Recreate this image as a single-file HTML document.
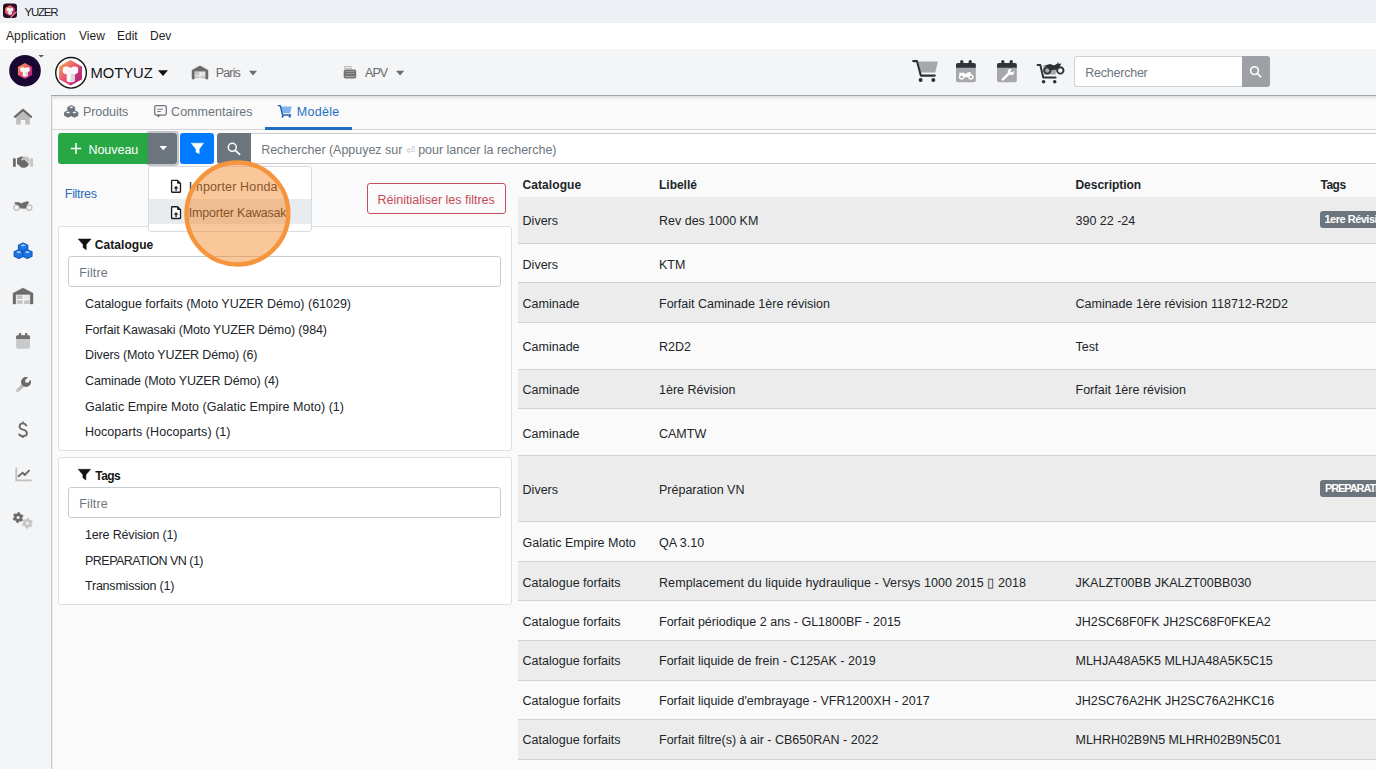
<!DOCTYPE html>
<html><head><meta charset="utf-8">
<style>
*{box-sizing:border-box}
html,body{margin:0;padding:0;width:1376px;height:769px;overflow:hidden;background:#f8f8f8;font-family:"Liberation Sans",sans-serif;color:#212529}
.a{position:absolute;line-height:1;white-space:nowrap}
.b{position:absolute}
svg{position:absolute;overflow:visible}
.row{position:absolute;left:518px;width:858px}
.g{background:#ececec}
.w{background:#fafafa}
.rl{position:absolute;left:518px;width:858px;height:1px;background:#d2d3d6}
</style></head><body>
<!-- chrome -->
<div class="b" style="left:0;top:0;width:1376px;height:23px;background:linear-gradient(#edf1f6 0,#edf1f6 19px,#f0f2f5 23px)"></div>
<div class="b" style="left:0;top:23px;width:1376px;height:26px;background:#ffffff"></div>
<div class="b" style="left:0;top:49px;width:1376px;height:47px;background:#f4f5f7"></div>
<div class="b" style="left:0;top:96px;width:51px;height:673px;background:#f4f5f7"></div>
<div class="b" style="left:51px;top:95px;width:1px;height:674px;background:#c8c8ca"></div>
<div class="b" style="left:51px;top:95px;width:1325px;height:1px;background:#a3a5a8"></div>
<div class="b" style="left:52px;top:96px;width:1324px;height:673px;background:#fafafa"></div>
<div class="b" style="left:52px;top:96px;width:1px;height:673px;background:#efeff1"></div>
<div class="b" style="left:52px;top:96px;width:1324px;height:4px;background:linear-gradient(#dcdddf,#fafafa)"></div>
<div class="b" style="left:52px;top:129px;width:1324px;height:1px;background:#d4d6d8"></div>
<div class="b" style="left:265px;top:127px;width:87px;height:3px;background:#1e6fc2"></div>

<!-- nav search -->
<div class="b" style="left:1074px;top:56px;width:169px;height:31px;background:#fff;border:1px solid #cfd2d5;border-right:none;border-radius:3px 0 0 3px"></div>
<div class="b" style="left:1242px;top:56px;width:28px;height:31px;background:#9da0a4;border-radius:0 3px 3px 0"></div>

<!-- toolbar -->
<div class="b" style="left:145.5px;top:131px;width:33px;height:35px;border:2.2px solid #c3c6c9;border-radius:4px"></div>
<div class="b" style="left:58px;top:133px;width:90px;height:31px;background:#28a745;border-radius:3px 0 0 3px"></div>
<div class="b" style="left:148px;top:133px;width:29px;height:31px;background:#6c757d;border-radius:0 3px 3px 0"></div>
<div class="b" style="left:180px;top:133px;width:34px;height:31px;background:#007bff;border-radius:3px"></div>
<div class="b" style="left:217px;top:133px;width:34px;height:31px;background:#6c757d;border-radius:3px 0 0 3px"></div>
<div class="b" style="left:251px;top:133px;width:1130px;height:31px;background:#fff;border:1px solid #c9cbce;border-left:none"></div>

<!-- reset button -->
<div class="b" style="left:367px;top:183px;width:139px;height:31px;border:1px solid #c2505b;border-radius:3px"></div>

<!-- cards -->
<div class="b" style="left:58px;top:226px;width:454px;height:225px;background:#fff;border:1px solid #dedfe0;border-radius:3px"></div>
<div class="b" style="left:68px;top:256px;width:433px;height:31px;background:#fff;border:1px solid #c9cbcd;border-radius:3px"></div>
<div class="b" style="left:58px;top:457px;width:454px;height:148px;background:#fff;border:1px solid #dedfe0;border-radius:3px"></div>
<div class="b" style="left:68px;top:487px;width:433px;height:31px;background:#fff;border:1px solid #c9cbcd;border-radius:3px"></div>

<!-- table rows -->
<div class="row g" style="top:197px;height:46px"></div>
<div class="row w" style="top:244px;height:38px"></div>
<div class="row g" style="top:283px;height:39px"></div>
<div class="row w" style="top:323px;height:46px"></div>
<div class="row g" style="top:370px;height:38px"></div>
<div class="row w" style="top:409px;height:46px"></div>
<div class="row g" style="top:456px;height:65px"></div>
<div class="row w" style="top:522px;height:39px"></div>
<div class="row g" style="top:562px;height:38px"></div>
<div class="row w" style="top:601px;height:39px"></div>
<div class="row g" style="top:641px;height:39px"></div>
<div class="row w" style="top:681px;height:38px"></div>
<div class="row g" style="top:720px;height:39px"></div>
<div class="row w" style="top:760px;height:20px"></div>
<div class="rl" style="top:243px"></div>
<div class="rl" style="top:282px"></div>
<div class="rl" style="top:322px"></div>
<div class="rl" style="top:369px"></div>
<div class="rl" style="top:408px"></div>
<div class="rl" style="top:455px"></div>
<div class="rl" style="top:521px"></div>
<div class="rl" style="top:561px"></div>
<div class="rl" style="top:600px"></div>
<div class="rl" style="top:640px"></div>
<div class="rl" style="top:680px"></div>
<div class="rl" style="top:719px"></div>
<div class="rl" style="top:759px"></div>

<!-- badges -->
<div class="b" style="left:1320px;top:211px;width:70px;height:17px;background:#6c757d;border-radius:3px"></div>
<div class="b" style="left:1320px;top:480px;width:70px;height:17px;background:#6c757d;border-radius:3px"></div>
<div class="a" style="left:1324.5px;top:214px;font-size:11px;font-weight:700;color:#fff;letter-spacing:-0.5px">1ere Révision</div>
<div class="a" style="left:1325px;top:483px;font-size:11px;font-weight:700;color:#fff;letter-spacing:-1.1px">PREPARATION VN</div>

<div class="a" style="left:24.6px;top:7px;font-size:11.5px;font-weight:400;color:#1b1b1b;letter-spacing:-1.246px;">YUZER</div>
<div class="a" style="left:6.0px;top:30px;font-size:12px;font-weight:400;color:#1f1f1f;letter-spacing:0.108px;">Application</div>
<div class="a" style="left:79.0px;top:30px;font-size:12px;font-weight:400;color:#1f1f1f;">View</div>
<div class="a" style="left:117.0px;top:30px;font-size:12px;font-weight:400;color:#1f1f1f;">Edit</div>
<div class="a" style="left:150.0px;top:30px;font-size:12px;font-weight:400;color:#1f1f1f;">Dev</div>
<div class="a" style="left:90.5px;top:66px;font-size:14.8px;font-weight:400;color:#141414;letter-spacing:-0.054px;">MOTYUZ</div>
<div class="a" style="left:215.8px;top:67px;font-size:12.5px;font-weight:400;color:#6a6a6a;letter-spacing:-0.871px;">Paris</div>
<div class="a" style="left:365.0px;top:67px;font-size:12.5px;font-weight:400;color:#6a6a6a;letter-spacing:-0.908px;">APV</div>
<div class="a" style="left:1085.3px;top:67px;font-size:12.5px;font-weight:400;color:#6c757d;letter-spacing:-0.236px;">Rechercher</div>
<div class="a" style="left:82.9px;top:106px;font-size:12.5px;font-weight:400;color:#6c757d;letter-spacing:-0.066px;">Produits</div>
<div class="a" style="left:171.1px;top:106px;font-size:12.5px;font-weight:400;color:#6c757d;letter-spacing:0.020px;">Commentaires</div>
<div class="a" style="left:296.7px;top:106px;font-size:12.5px;font-weight:400;color:#1e6fc2;letter-spacing:0.300px;">Modèle</div>
<div class="a" style="left:88.4px;top:144px;font-size:12.5px;font-weight:400;color:#ffffff;letter-spacing:-0.024px;">Nouveau</div>
<div class="a" style="left:261.2px;top:144px;font-size:12.5px;font-weight:400;color:#6c757d;letter-spacing:-0.027px;">Rechercher (Appuyez sur <span style='color:#b9bcbf;font-size:10.5px'>⏎</span> pour lancer la recherche)</div>
<div class="a" style="left:64.8px;top:188px;font-size:12.5px;font-weight:400;color:#2a6cb6;letter-spacing:-0.305px;">Filtres</div>
<div class="a" style="left:377.6px;top:194px;font-size:12.5px;font-weight:400;color:#c44c58;letter-spacing:-0.009px;">Réinitialiser les filtres</div>
<div class="a" style="left:94.8px;top:239px;font-size:12px;font-weight:700;color:#161616;letter-spacing:0.061px;">Catalogue</div>
<div class="a" style="left:79.2px;top:267px;font-size:12.5px;font-weight:400;color:#6c757d;letter-spacing:0.144px;">Filtre</div>
<div class="a" style="left:85.0px;top:298px;font-size:12.5px;font-weight:400;color:#212529;letter-spacing:-0.013px;">Catalogue forfaits (Moto YUZER Démo) (61029)</div>
<div class="a" style="left:85.0px;top:324px;font-size:12.5px;font-weight:400;color:#212529;letter-spacing:-0.130px;">Forfait Kawasaki (Moto YUZER Démo) (984)</div>
<div class="a" style="left:85.0px;top:349px;font-size:12.5px;font-weight:400;color:#212529;letter-spacing:-0.137px;">Divers (Moto YUZER Démo) (6)</div>
<div class="a" style="left:85.0px;top:375px;font-size:12.5px;font-weight:400;color:#212529;letter-spacing:-0.129px;">Caminade (Moto YUZER Démo) (4)</div>
<div class="a" style="left:85.0px;top:401px;font-size:12.5px;font-weight:400;color:#212529;letter-spacing:0.045px;">Galatic Empire Moto (Galatic Empire Moto) (1)</div>
<div class="a" style="left:85.0px;top:426px;font-size:12.5px;font-weight:400;color:#212529;letter-spacing:0.042px;">Hocoparts (Hocoparts) (1)</div>
<div class="a" style="left:95.3px;top:470px;font-size:12px;font-weight:700;color:#161616;letter-spacing:-0.542px;">Tags</div>
<div class="a" style="left:79.2px;top:498px;font-size:12.5px;font-weight:400;color:#6c757d;letter-spacing:0.144px;">Filtre</div>
<div class="a" style="left:85.0px;top:529px;font-size:12.5px;font-weight:400;color:#212529;letter-spacing:-0.168px;">1ere Révision (1)</div>
<div class="a" style="left:85.0px;top:555px;font-size:12.5px;font-weight:400;color:#212529;letter-spacing:-0.520px;">PREPARATION VN (1)</div>
<div class="a" style="left:85.0px;top:580px;font-size:12.5px;font-weight:400;color:#212529;letter-spacing:-0.221px;">Transmission (1)</div>
<div class="a" style="left:522.6px;top:179px;font-size:12px;font-weight:700;color:#212529;letter-spacing:0.061px;">Catalogue</div>
<div class="a" style="left:659.0px;top:179px;font-size:12px;font-weight:700;color:#212529;letter-spacing:-0.019px;">Libellé</div>
<div class="a" style="left:1075.5px;top:179px;font-size:12px;font-weight:700;color:#212529;letter-spacing:-0.042px;">Description</div>
<div class="a" style="left:1320.4px;top:179px;font-size:12px;font-weight:700;color:#212529;letter-spacing:-0.442px;">Tags</div>
<div class="a" style="left:522.6px;top:215px;font-size:12.5px;font-weight:400;color:#212529;">Divers</div>
<div class="a" style="left:659.0px;top:215px;font-size:12.5px;font-weight:400;color:#212529;">Rev des 1000 KM</div>
<div class="a" style="left:1075.5px;top:215px;font-size:12.5px;font-weight:400;color:#212529;">390 22 -24</div>
<div class="a" style="left:522.6px;top:259px;font-size:12.5px;font-weight:400;color:#212529;">Divers</div>
<div class="a" style="left:659.0px;top:259px;font-size:12.5px;font-weight:400;color:#212529;">KTM</div>
<div class="a" style="left:522.6px;top:298px;font-size:12.5px;font-weight:400;color:#212529;">Caminade</div>
<div class="a" style="left:659.0px;top:298px;font-size:12.5px;font-weight:400;color:#212529;">Forfait Caminade 1ère révision</div>
<div class="a" style="left:1075.5px;top:298px;font-size:12.5px;font-weight:400;color:#212529;">Caminade 1ère révision 118712-R2D2</div>
<div class="a" style="left:522.6px;top:341px;font-size:12.5px;font-weight:400;color:#212529;">Caminade</div>
<div class="a" style="left:659.0px;top:341px;font-size:12.5px;font-weight:400;color:#212529;">R2D2</div>
<div class="a" style="left:1075.5px;top:341px;font-size:12.5px;font-weight:400;color:#212529;">Test</div>
<div class="a" style="left:522.6px;top:384px;font-size:12.5px;font-weight:400;color:#212529;">Caminade</div>
<div class="a" style="left:659.0px;top:384px;font-size:12.5px;font-weight:400;color:#212529;">1ère Révision</div>
<div class="a" style="left:1075.5px;top:384px;font-size:12.5px;font-weight:400;color:#212529;">Forfait 1ère révision</div>
<div class="a" style="left:522.6px;top:428px;font-size:12.5px;font-weight:400;color:#212529;">Caminade</div>
<div class="a" style="left:659.0px;top:428px;font-size:12.5px;font-weight:400;color:#212529;">CAMTW</div>
<div class="a" style="left:522.6px;top:484px;font-size:12.5px;font-weight:400;color:#212529;">Divers</div>
<div class="a" style="left:659.0px;top:484px;font-size:12.5px;font-weight:400;color:#212529;">Préparation VN</div>
<div class="a" style="left:522.6px;top:537px;font-size:12.5px;font-weight:400;color:#212529;">Galatic Empire Moto</div>
<div class="a" style="left:659.0px;top:537px;font-size:12.5px;font-weight:400;color:#212529;">QA 3.10</div>
<div class="a" style="left:522.6px;top:577px;font-size:12.5px;font-weight:400;color:#212529;">Catalogue forfaits</div>
<div class="a" style="left:659.0px;top:577px;font-size:12.5px;font-weight:400;color:#212529;letter-spacing:0.082px;">Remplacement du liquide hydraulique - Versys 1000 2015 ▯ 2018</div>
<div class="a" style="left:1075.5px;top:577px;font-size:12.5px;font-weight:400;color:#212529;">JKALZT00BB JKALZT00BB030</div>
<div class="a" style="left:522.6px;top:616px;font-size:12.5px;font-weight:400;color:#212529;">Catalogue forfaits</div>
<div class="a" style="left:659.0px;top:616px;font-size:12.5px;font-weight:400;color:#212529;">Forfait périodique 2 ans - GL1800BF - 2015</div>
<div class="a" style="left:1075.5px;top:616px;font-size:12.5px;font-weight:400;color:#212529;">JH2SC68F0FK JH2SC68F0FKEA2</div>
<div class="a" style="left:522.6px;top:655px;font-size:12.5px;font-weight:400;color:#212529;">Catalogue forfaits</div>
<div class="a" style="left:659.0px;top:655px;font-size:12.5px;font-weight:400;color:#212529;">Forfait liquide de frein - C125AK - 2019</div>
<div class="a" style="left:1075.5px;top:655px;font-size:12.5px;font-weight:400;color:#212529;">MLHJA48A5K5 MLHJA48A5K5C15</div>
<div class="a" style="left:522.6px;top:695px;font-size:12.5px;font-weight:400;color:#212529;">Catalogue forfaits</div>
<div class="a" style="left:659.0px;top:695px;font-size:12.5px;font-weight:400;color:#212529;">Forfait liquide d'embrayage - VFR1200XH - 2017</div>
<div class="a" style="left:1075.5px;top:695px;font-size:12.5px;font-weight:400;color:#212529;">JH2SC76A2HK JH2SC76A2HKC16</div>
<div class="a" style="left:522.6px;top:734px;font-size:12.5px;font-weight:400;color:#212529;">Catalogue forfaits</div>
<div class="a" style="left:659.0px;top:734px;font-size:12.5px;font-weight:400;color:#212529;">Forfait filtre(s) à air - CB650RAN - 2022</div>
<div class="a" style="left:1075.5px;top:734px;font-size:12.5px;font-weight:400;color:#212529;">MLHRH02B9N5 MLHRH02B9N5C01</div>
<svg width="1376" height="769" style="left:0;top:0" viewBox="0 0 1376 769">
<defs>
<linearGradient id="lg1" x1="0" y1="0" x2="1" y2="1">
<stop offset="0" stop-color="#f5b04a"/><stop offset="0.45" stop-color="#ea5a6e"/><stop offset="1" stop-color="#b51d7e"/>
</linearGradient>
</defs>
<rect x="3" y="3.6" width="14" height="14.3" rx="3.2" fill="#2a0b28"/>
<g transform="translate(10,10.6) scale(0.42) translate(-70.5,-72.8)">
<polygon points="70.5,60 81.9,66.4 81.9,79.2 70.5,85.6 59.1,79.2 59.1,66.4" fill="url(#lg1)"/>
<polygon points="70.5,72.8 81.9,66.4 81.9,79.2 70.5,85.6" fill="#b8207c" opacity="0.55"/>
<path d="M62.8,69.3 Q62.8,66.8 65.3,66.6 Q68,66.3 70.5,67.9 Q73,66.3 75.7,66.6 Q78.2,66.8 78.2,69.3 L78.2,71.6 Q78.2,73.6 76,73.9 L74.9,74.3 L74.9,80.2 Q74.9,82.2 70.8,82.2 Q66.7,82.2 66.7,80.2 L66.7,74.3 L65,73.9 Q62.8,73.6 62.8,71.6 Z" fill="#fbf7f8"/>
<path d="M70.8,73.5 L74.8,74.4 L74.8,80.6 Q72.8,81.6 70.8,81.8 Z" fill="#d9d6d8"/>
</g>
<line x1="10.5" y1="17.6" x2="16.6" y2="11.6" stroke="#f3a37e" stroke-width="1.1"/>
<circle cx="25" cy="70.7" r="15.8" fill="#1b0832"/>
<g transform="translate(25,71) scale(0.62) translate(-70.5,-72.8)">
<polygon points="70.5,60 81.9,66.4 81.9,79.2 70.5,85.6 59.1,79.2 59.1,66.4" fill="url(#lg1)"/>
<polygon points="70.5,72.8 81.9,66.4 81.9,79.2 70.5,85.6" fill="#b8207c" opacity="0.55"/>
<path d="M62.8,69.3 Q62.8,66.8 65.3,66.6 Q68,66.3 70.5,67.9 Q73,66.3 75.7,66.6 Q78.2,66.8 78.2,69.3 L78.2,71.6 Q78.2,73.6 76,73.9 L74.9,74.3 L74.9,80.2 Q74.9,82.2 70.8,82.2 Q66.7,82.2 66.7,80.2 L66.7,74.3 L65,73.9 Q62.8,73.6 62.8,71.6 Z" fill="#fbf7f8"/>
<path d="M70.8,73.5 L74.8,74.4 L74.8,80.6 Q72.8,81.6 70.8,81.8 Z" fill="#d9d6d8"/>
</g>
<polygon points="38.3,54.9 44,54.9 41.15,57.6" fill="#5a5a5a"/>
<circle cx="71.05" cy="72.8" r="15.3" fill="#fff" stroke="#141414" stroke-width="1.4"/>
<g transform="translate(70.5,72.8) scale(1.0) translate(-70.5,-72.8)">
<polygon points="70.5,60 81.9,66.4 81.9,79.2 70.5,85.6 59.1,79.2 59.1,66.4" fill="url(#lg1)"/>
<polygon points="70.5,72.8 81.9,66.4 81.9,79.2 70.5,85.6" fill="#b8207c" opacity="0.55"/>
<path d="M62.8,69.3 Q62.8,66.8 65.3,66.6 Q68,66.3 70.5,67.9 Q73,66.3 75.7,66.6 Q78.2,66.8 78.2,69.3 L78.2,71.6 Q78.2,73.6 76,73.9 L74.9,74.3 L74.9,80.2 Q74.9,82.2 70.8,82.2 Q66.7,82.2 66.7,80.2 L66.7,74.3 L65,73.9 Q62.8,73.6 62.8,71.6 Z" fill="#fbf7f8"/>
<path d="M70.8,73.5 L74.8,74.4 L74.8,80.6 Q72.8,81.6 70.8,81.8 Z" fill="#d9d6d8"/>
</g>
<polygon points="158,70.2 168,70.2 163,76" fill="#111"/>
<path d="M192,70.2 L200,65.8 L208,70.2 L208,79 L205.6,79 L205.6,71.2 L194.4,71.2 L194.4,79 L192,79 Z" fill="#6b6b6b" stroke="#6b6b6b" stroke-width="0.5" stroke-linejoin="round"/>
<rect x="194.8" y="72" width="4.6" height="2.9" fill="#c6c6c6"/><rect x="194.8" y="75.6" width="4.6" height="2.8" fill="#c6c6c6"/><rect x="200.6" y="75.6" width="4.4" height="2.8" fill="#c6c6c6"/><rect x="200.6" y="72" width="4.4" height="2.9" fill="#e4e4e4"/>
<polygon points="249,70.8 257,70.8 253,75.4" fill="#6b6b6b"/>
<rect x="344.9" y="66.4" width="6.2" height="2.3" fill="none" stroke="#a9a9a9" stroke-width="0.8"/>
<rect x="343.7" y="69.6" width="12.5" height="9" rx="1.8" fill="#707070"/>
<rect x="345.3" y="71" width="9.4" height="1" fill="#9a9a9a"/><rect x="345.3" y="73.2" width="9.4" height="1" fill="#9a9a9a"/><rect x="345" y="76" width="10" height="1.1" fill="#a5a5a5"/>
<polygon points="396,70.8 404.2,70.8 400.1,75.4" fill="#6b6b6b"/>
<circle cx="1254.5" cy="70.6" r="3.9" fill="none" stroke="#fff" stroke-width="1.6"/><line x1="1257.4" y1="73.5" x2="1260.6" y2="76.6" stroke="#fff" stroke-width="1.7" stroke-linecap="round"/>
<path d="M918.4,61.6 L937.2,61.6 Q938,61.8 937.7,62.8 L935.2,72.4 L920.8,72.4 Z" fill="#a6a8ab"/>
<path d="M913.2,61.1 L917,61.1 L920.8,75.6 L934.8,75.6" fill="none" stroke="#2d3035" stroke-width="2.1" stroke-linecap="round" stroke-linejoin="round"/>
<circle cx="920.6" cy="80.1" r="2" fill="#2d3035"/><circle cx="933.3" cy="80.1" r="2" fill="#2d3035"/>
<rect x="956" y="63" width="19.8" height="19.2" rx="2" fill="#a6a8ab"/>
<path d="M956,67.8 L956,65 Q956,63 958,63 L973.8,63 Q975.8,63 975.8,65 L975.8,67.8 Z" fill="#30343a"/>
<rect x="960.2" y="60" width="3.2" height="4.5" rx="1.5" fill="#30343a"/><rect x="968.6" y="60" width="3.2" height="4.5" rx="1.5" fill="#30343a"/><circle cx="961.6" cy="77" r="2" fill="none" stroke="#fff" stroke-width="1.4"/><circle cx="970.9" cy="77" r="2" fill="none" stroke="#fff" stroke-width="1.4"/><path d="M959.3,72.8 L964,72.8 L965.6,73.9 L968,72.3 L970.6,72.3 L971.3,73.2 L969.6,75 L968.4,77.3 L963.8,77.3 L962.4,75.3 L959.3,74.8 Z" fill="#fff"/>
<rect x="997" y="63" width="19.8" height="19.2" rx="2" fill="#a6a8ab"/>
<path d="M997,67.8 L997,65 Q997,63 999,63 L1014.8,63 Q1016.8,63 1016.8,65 L1016.8,67.8 Z" fill="#30343a"/>
<rect x="1001.2" y="60" width="3.2" height="4.5" rx="1.5" fill="#30343a"/><rect x="1009.6" y="60" width="3.2" height="4.5" rx="1.5" fill="#30343a"/><line x1="1002.8" y1="79.4" x2="1009" y2="73.4" stroke="#fff" stroke-width="2.5" stroke-linecap="round"/><circle cx="1010.9" cy="71.9" r="3.2" fill="#fff"/><circle cx="1011.9" cy="70.9" r="1.35" fill="#a6a8ab"/><line x1="1011.9" y1="70.9" x2="1014.8" y2="68" stroke="#a6a8ab" stroke-width="2.4"/>
<path d="M1043,65.2 L1056.5,65.2 L1055.6,74.6 L1044.3,74.6 Z" fill="#a6a8ab"/>
<path d="M1037.6,64.9 L1040.3,64.9 L1043.3,77.4 L1055.6,77.4" fill="none" stroke="#2d3035" stroke-width="2" stroke-linecap="round" stroke-linejoin="round"/>
<circle cx="1043.6" cy="81.8" r="1.8" fill="#2d3035"/><circle cx="1054.7" cy="81.8" r="1.8" fill="#2d3035"/>
<circle cx="1047.3" cy="70.4" r="3.2" fill="none" stroke="#2d3035" stroke-width="1.9"/><circle cx="1060.3" cy="70.4" r="3.2" fill="none" stroke="#2d3035" stroke-width="1.9"/>
<path d="M1044.8,65.6 L1050,64 L1054,65.5 L1057.5,63.4 L1061.5,63.8 L1059.5,66.5 L1057,69.5 L1050,70.3 L1047.5,67.2 Z" fill="#2d3035"/><line x1="1058" y1="63.8" x2="1057.6" y2="62.4" stroke="#2d3035" stroke-width="0.8"/>
<path d="M16.2,115.6 L23,110.2 L29.8,115.6 L29.8,124.6 L25.3,124.6 L25.3,120 L20.7,120 L20.7,124.6 L16.2,124.6 Z" fill="#bdbdbd"/>
<polyline points="14.9,116.9 23,109.9 31.1,116.9" fill="none" stroke="#6b6b6b" stroke-width="2.1" stroke-linecap="round" stroke-linejoin="round"/>
<rect x="13" y="158.2" width="2.8" height="8.6" rx="0.6" fill="#6b6b6b"/><rect x="30.2" y="158.2" width="2.8" height="8.6" rx="0.6" fill="#c4c4c4"/>
<path d="M20,157 Q23.5,156 26.5,156.6 L29.5,158.3 L29.5,164.5 L25,159.5 L21.5,161 Z" fill="#c4c4c4"/>
<path d="M17,158.6 Q19,156.6 21.5,156.4 L23.5,157 L20.8,159.6 Q21.8,161.2 24.5,159.6 L28.8,164 Q28.6,166.6 26,167.2 Q24,168.2 21.5,167.4 L17,163.8 Z" fill="#6b6b6b"/>
<circle cx="16.6" cy="207.6" r="2.7" fill="none" stroke="#c2c2c2" stroke-width="1.4"/><circle cx="29.2" cy="207.6" r="2.7" fill="none" stroke="#c2c2c2" stroke-width="1.4"/>
<path d="M14.8,202.2 L19.5,202.2 L21,203.6 L24.5,202 L28,201.2 L29,202.4 L27,205.2 L25.5,208.8 L20.5,208.6 L18.5,205.2 L14.8,204 Z" fill="#6b6b6b"/>
<path d="M23.10,243.00 L27.73,245.20 L27.73,249.59 L23.10,251.79 L18.47,249.59 L18.47,245.20 Z" fill="#1e74e0" stroke="#0d5bbf" stroke-width="1.20" stroke-linejoin="round"/><path d="M23.10,244.06 L25.88,245.37 L23.10,246.69 L20.32,245.37 Z" fill="#8cc8ff"/><path d="M18.83,249.71 L23.46,251.91 L23.46,256.30 L18.83,258.50 L14.20,256.30 L14.20,251.91 Z" fill="#1e74e0" stroke="#0d5bbf" stroke-width="1.20" stroke-linejoin="round"/><path d="M18.83,250.76 L21.60,252.08 L18.83,253.40 L16.05,252.08 Z" fill="#8cc8ff"/><path d="M27.37,249.71 L32.00,251.91 L32.00,256.30 L27.37,258.50 L22.74,256.30 L22.74,251.91 Z" fill="#1e74e0" stroke="#0d5bbf" stroke-width="1.20" stroke-linejoin="round"/><path d="M27.37,250.76 L30.15,252.08 L27.37,253.40 L24.60,252.08 Z" fill="#8cc8ff"/>
<path d="M13,293.2 L23,288 L33,293.2 L33,304 L30.2,304 L30.2,294.4 L15.8,294.4 L15.8,304 L13,304 Z" fill="#6b6b6b" stroke="#6b6b6b" stroke-width="0.4" stroke-linejoin="round"/>
<rect x="17.2" y="295.4" width="5.4" height="3.6" fill="#c3c3c3"/><rect x="17.2" y="300.3" width="5.4" height="3.6" fill="#c3c3c3"/><rect x="24.2" y="300.3" width="5.4" height="3.6" fill="#c3c3c3"/><rect x="24.2" y="295.4" width="5.4" height="3.6" fill="#e6e6e6"/>
<rect x="16.1" y="335.2" width="13.9" height="13.5" rx="1.6" fill="#c8c9cb"/><path d="M16.1,339 L16.1,336.8 Q16.1,335.2 17.7,335.2 L28.4,335.2 Q30,335.2 30,336.8 L30,339 Z" fill="#6e6e6e"/><rect x="18.9" y="333" width="2.3" height="3" rx="0.6" fill="#6e6e6e"/><rect x="25" y="333" width="2.3" height="3" rx="0.6" fill="#6e6e6e"/>
<line x1="17.6" y1="390.6" x2="23.2" y2="385.2" stroke="#bdbdbd" stroke-width="3.2" stroke-linecap="round"/><circle cx="17.6" cy="390.6" r="0.6" fill="#f4f5f7"/>
<circle cx="26" cy="382" r="5" fill="#6b6b6b"/><circle cx="27" cy="380.9" r="1.9" fill="#f4f5f7"/><line x1="27" y1="380.9" x2="31.8" y2="376.1" stroke="#f4f5f7" stroke-width="3.6"/>
<path d="M26.3,425.4 Q25,423.4 22.9,423.4 Q19.6,423.4 19.6,426.4 Q19.6,428.8 23.1,429.6 Q26.9,430.5 26.9,433.3 Q26.9,436.2 22.9,436.2 Q20.4,436.2 19.2,434.4" fill="none" stroke="#6b6b6b" stroke-width="1.9" stroke-linecap="round"/><line x1="23" y1="421.6" x2="23" y2="423.6" stroke="#6b6b6b" stroke-width="1.5"/><line x1="23" y1="436" x2="23" y2="438" stroke="#6b6b6b" stroke-width="1.5"/>
<polyline points="16.3,468.4 16.3,480.4 30.8,480.4" fill="none" stroke="#c0c0c0" stroke-width="1.9" stroke-linecap="round"/><polyline points="18.6,476.3 22.6,472.6 24.7,475 29,470.7" fill="none" stroke="#6b6b6b" stroke-width="1.9" stroke-linecap="round" stroke-linejoin="round"/>
<polygon points="18.10,512.30 19.45,512.48 20.05,514.12 20.86,514.74 22.60,514.90 23.12,516.15 22.00,517.50 21.87,518.51 22.60,520.10 21.78,521.18 20.05,520.88 19.11,521.27 18.10,522.70 16.75,522.52 16.15,520.88 15.34,520.26 13.60,520.10 13.08,518.85 14.20,517.50 14.33,516.49 13.60,514.90 14.42,513.82 16.15,514.12 17.09,513.73" fill="#6b6b6b" stroke="#6b6b6b" stroke-width="0.6" stroke-linejoin="round"/><circle cx="18.1" cy="517.5" r="1.5" fill="#f4f5f7"/>
<polygon points="27.40,518.00 28.75,518.18 29.35,519.82 30.16,520.44 31.90,520.60 32.42,521.85 31.30,523.20 31.17,524.21 31.90,525.80 31.08,526.88 29.35,526.58 28.41,526.97 27.40,528.40 26.05,528.22 25.45,526.58 24.64,525.96 22.90,525.80 22.38,524.55 23.50,523.20 23.63,522.19 22.90,520.60 23.72,519.52 25.45,519.82 26.39,519.43" fill="#c6c6c6" stroke="#c6c6c6" stroke-width="0.6" stroke-linejoin="round"/><circle cx="27.4" cy="523.2" r="1.5" fill="#f4f5f7"/>
<path d="M71.25,105.60 L74.71,107.24 L74.71,110.53 L71.25,112.17 L67.79,110.53 L67.79,107.24 Z" fill="#6c757d" stroke="#6c757d" stroke-width="0.90" stroke-linejoin="round"/><path d="M71.25,106.39 L73.32,107.37 L71.25,108.36 L69.18,107.37 Z" fill="#fafafa"/><path d="M68.06,110.63 L71.52,112.27 L71.52,115.56 L68.06,117.20 L64.60,115.56 L64.60,112.27 Z" fill="#6c757d" stroke="#6c757d" stroke-width="0.90" stroke-linejoin="round"/><path d="M68.06,111.42 L70.13,112.40 L68.06,113.39 L65.98,112.40 Z" fill="#fafafa"/><path d="M74.44,110.63 L77.90,112.27 L77.90,115.56 L74.44,117.20 L70.98,115.56 L70.98,112.27 Z" fill="#6c757d" stroke="#6c757d" stroke-width="0.90" stroke-linejoin="round"/><path d="M74.44,111.42 L76.52,112.40 L74.44,113.39 L72.37,112.40 Z" fill="#fafafa"/>
<rect x="154.7" y="105.5" width="11.6" height="9.6" rx="1.6" fill="none" stroke="#6c757d" stroke-width="1.25"/><path d="M156.8,114.8 L158.2,117.8 L160.8,114.8 Z" fill="#6c757d"/><line x1="157.3" y1="109.2" x2="163" y2="109.2" stroke="#6c757d" stroke-width="1"/><line x1="157.3" y1="111.5" x2="160.8" y2="111.5" stroke="#6c757d" stroke-width="1"/>
<path d="M280.8,106.5 L291.6,106.5 L290.2,113.2 L282.4,113.2 Z" fill="#7fb2ec"/><path d="M278.3,105.6 L280.2,105.6 L282.6,115 L290.6,115" fill="none" stroke="#1d5fae" stroke-width="1.4" stroke-linecap="round" stroke-linejoin="round"/><circle cx="282.6" cy="116.6" r="1.1" fill="#1d5fae"/><circle cx="289.8" cy="116.6" r="1.1" fill="#1d5fae"/>
<line x1="70.8" y1="148.5" x2="81.2" y2="148.5" stroke="#fff" stroke-width="1.5"/><line x1="76" y1="143.1" x2="76" y2="153.9" stroke="#fff" stroke-width="1.5"/>
<polygon points="159.5,145.9 167.1,145.9 163.3,150.3" fill="#fff"/>
<path d="M191.2,143.2 L203.6,143.2 L199.2,149.1 L199.2,153.6 L196,152.2 L196,149.1 Z" fill="#fff" stroke="#fff" stroke-width="0.5" stroke-linejoin="round"/>
<circle cx="232.3" cy="147.3" r="4" fill="none" stroke="#fff" stroke-width="1.5"/><line x1="235.3" y1="150.3" x2="239.6" y2="154.3" stroke="#fff" stroke-width="1.7" stroke-linecap="round"/>
<path d="M78.2,239 L91.1,239 L86.2,244.6 L86.2,249.8 L83.1,247.6 L83.1,244.6 Z" fill="#111" stroke="#111" stroke-width="0.5" stroke-linejoin="round"/>
<path d="M78.2,469.3 L90.6,469.3 L85.9,474.8 L85.9,480 L82.9,477.8 L82.9,474.8 Z" fill="#111" stroke="#111" stroke-width="0.5" stroke-linejoin="round"/>
</svg>
<!--DDSPLIT-->

<!-- dropdown menu -->
<div class="b" style="left:148px;top:166px;width:164px;height:66px;background:#fff;border:1px solid #d9dcdf;border-radius:3px"></div>
<div class="b" style="left:149px;top:199px;width:162px;height:25px;background:#e9ecef"></div>
<div class="a" style="left:188.7px;top:181px;font-size:12.5px;font-weight:400;color:#212529;letter-spacing:0.157px;">Importer Honda</div>
<div class="a" style="left:188.7px;top:207px;font-size:12.5px;font-weight:400;color:#212529;letter-spacing:-0.188px;">Importer Kawasaki</div>
<svg width="1376" height="769" style="left:0;top:0" viewBox="0 0 1376 769">
<path d="M172.2,180.4 L177.6,180.4 L180.5,183.4 L180.5,191.60000000000002 Q180.5,192.20000000000002 179.9,192.20000000000002 L172.2,192.20000000000002 Q171.6,192.20000000000002 171.6,191.60000000000002 L171.6,181.0 Q171.6,180.4 172.2,180.4 Z" fill="#fff" stroke="#1e1e1e" stroke-width="1.35" stroke-linejoin="round"/><path d="M177.2,180.20000000000002 L180.7,183.8 L177.2,183.8 Z" fill="#1e1e1e"/><path d="M173.7,188.4 L176.05,185.70000000000002 L178.4,188.4 Z" fill="#1e1e1e"/><rect x="175.4" y="188.0" width="1.3" height="2.8" fill="#1e1e1e"/>
<path d="M172.2,206.7 L177.6,206.7 L180.5,209.7 L180.5,217.9 Q180.5,218.5 179.9,218.5 L172.2,218.5 Q171.6,218.5 171.6,217.9 L171.6,207.29999999999998 Q171.6,206.7 172.2,206.7 Z" fill="#fff" stroke="#1e1e1e" stroke-width="1.35" stroke-linejoin="round"/><path d="M177.2,206.5 L180.7,210.1 L177.2,210.1 Z" fill="#1e1e1e"/><path d="M173.7,214.7 L176.05,212.0 L178.4,214.7 Z" fill="#1e1e1e"/><rect x="175.4" y="214.29999999999998" width="1.3" height="2.8" fill="#1e1e1e"/>
<circle cx="237.4" cy="213.5" r="50.9" fill="rgb(245,137,42)" fill-opacity="0.47" stroke="#f5953e" stroke-width="4.5"/>
</svg>

</body></html>
